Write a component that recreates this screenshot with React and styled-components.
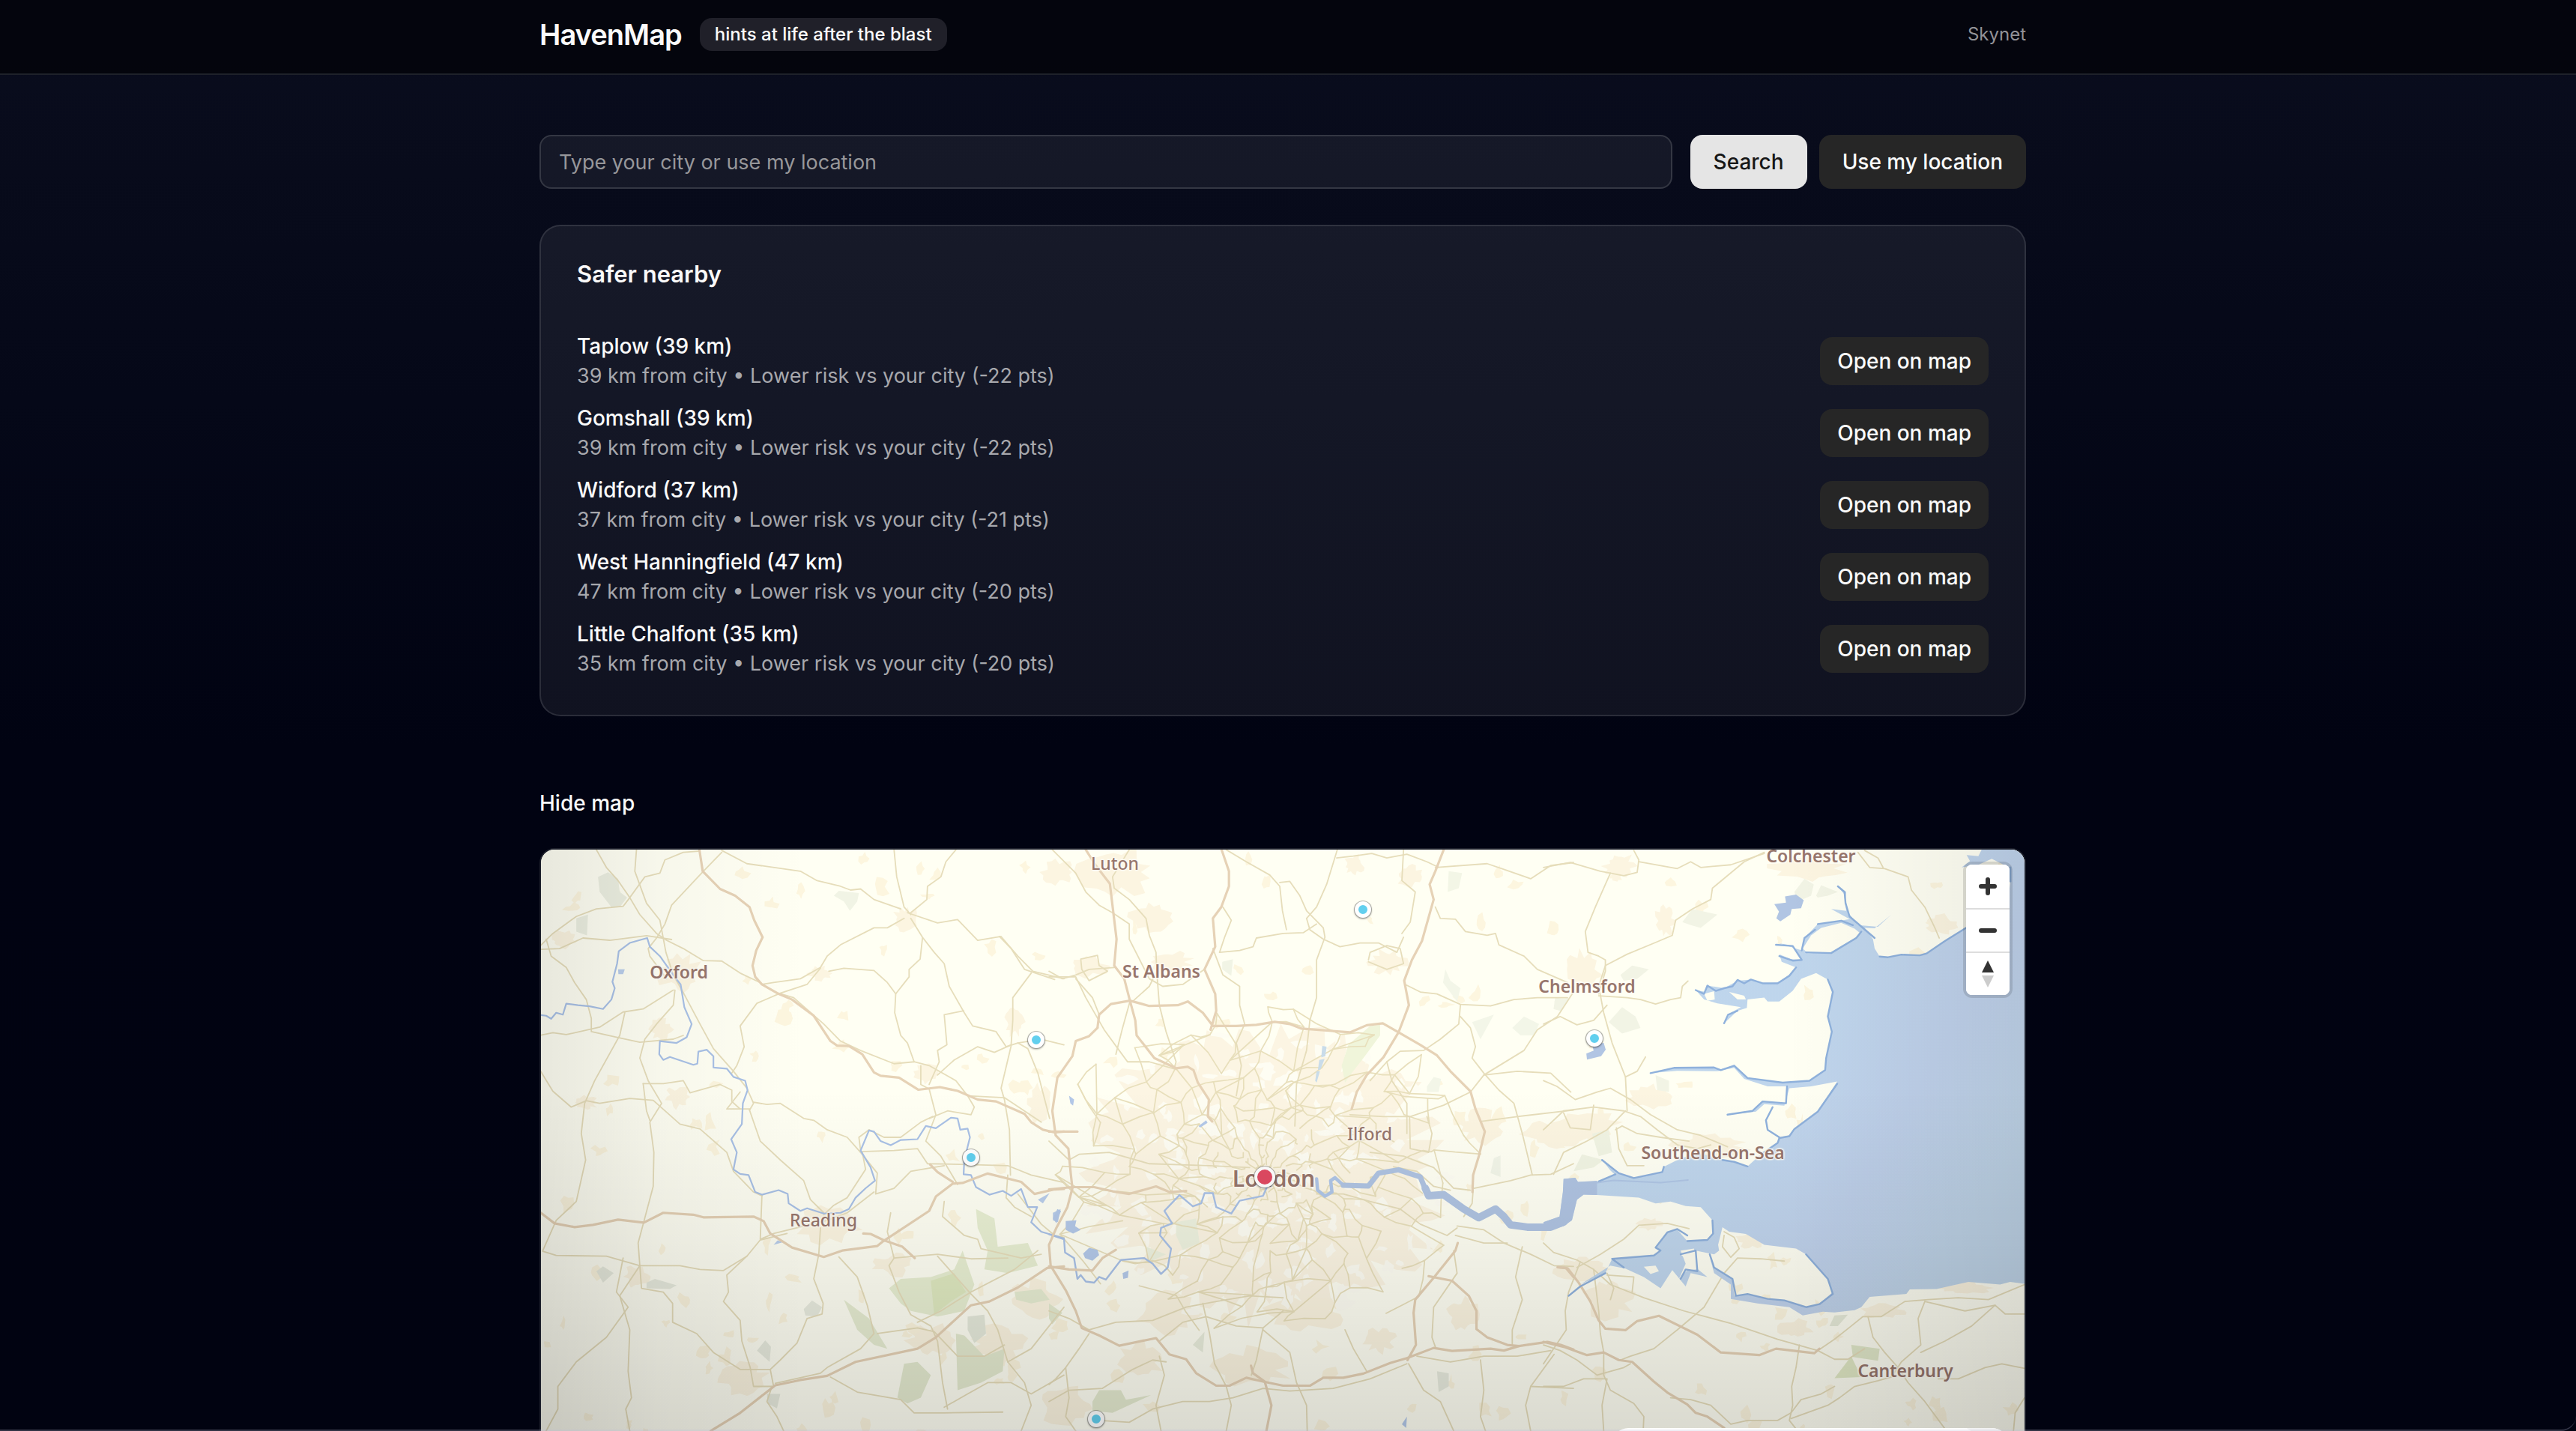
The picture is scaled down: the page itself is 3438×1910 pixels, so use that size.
import React from "react";
import styled, { createGlobalStyle } from "styled-components";

const GlobalStyle = createGlobalStyle`
  *, *::before, *::after { box-sizing: border-box; }
  html { background: #010312; }
  body {
    margin: 0;
    font-family: Inter, "Liberation Sans", sans-serif;
    color: #fafafa;
    -webkit-font-smoothing: antialiased;
  }
  button, input { font: inherit; color: inherit; }
`;

const Page = styled.div`
  height: 100vh;
  overflow: hidden;
  background: linear-gradient(180deg, #0a0d1e 0%, #080b1b 12%, #050818 28%, #010312 52%, #010311 100%);
`;

const WindowEdge = styled.div`
  position: fixed;
  inset: 0;
  pointer-events: none;
  border-bottom: 2px solid rgba(190, 190, 215, 0.26);
  border-bottom-right-radius: 20px;
`;

const Container = styled.div`
  max-width: 2048px;
  margin: 0 auto;
  padding: 0 32px;
`;

const Scroller = styled.div`
  padding-right: 14px;
`;

const Header = styled.header`
  background: rgba(0, 0, 0, 0.55);
  border-bottom: 2px solid #1e212a;
  padding-right: 14px;
`;

const HeaderRow = styled.div`
  display: flex;
  align-items: center;
  justify-content: space-between;
  height: 98px;
  padding-bottom: 6px;
`;

const Brand = styled.div`
  display: flex;
  align-items: center;
  gap: 24px;
`;

const Logo = styled.h1`
  margin: 0;
  font-size: 38px;
  line-height: 56px;
  font-weight: 600;
  letter-spacing: -0.025em;
`;

const Badge = styled.span`
  padding: 0 20px;
  font-size: 24px;
  line-height: 44px;
  font-weight: 500;
  border-radius: 16px;
  background: #202029;
`;

const Note = styled.span`
  font-size: 24px;
  line-height: 32px;
  color: #929297;
`;

const SearchForm = styled.form`
  display: flex;
  gap: 24px;
  padding-top: 80px;
`;

const CityInput = styled.input`
  flex: 1;
  min-width: 0;
  height: 72px;
  padding: 0 24px;
  font-size: 27px;
  border: 2px solid #343743;
  border-radius: 16px;
  background: rgba(255, 255, 255, 0.055);
  outline: none;
  &::placeholder { color: #97979a; opacity: 1; }
`;

const Actions = styled.div`
  display: flex;
  gap: 16px;
`;

const Button = styled.button`
  height: ${(p) => (p.$small ? 64 : 72)}px;
  padding: 0 ${(p) => (p.$small ? 23 : 31)}px;
  border: 0;
  border-radius: 16px;
  font-size: 28px;
  font-weight: 500;
  white-space: nowrap;
  background: ${(p) => (p.$light ? "#e5e5e5" : "#262626")};
  color: ${(p) => (p.$light ? "#171717" : "#fafafa")};
`;

const Card = styled.section`
  margin-top: 48px;
  padding: 48px;
  border: 2px solid rgba(255, 255, 255, 0.11);
  border-radius: 28px;
  background: rgba(255, 255, 255, 0.062);
`;

const CardTitle = styled.h2`
  margin: 0 0 60px;
  font-size: 31px;
  line-height: 32px;
  font-weight: 600;
`;

const PlaceList = styled.ul`
  list-style: none;
  margin: 0;
  padding: 0;
  display: grid;
  gap: 16px;
`;

const Place = styled.li`
  display: flex;
  align-items: center;
  justify-content: space-between;
`;

const PlaceName = styled.div`
  font-size: 28px;
  line-height: 40px;
  font-weight: 500;
`;

const PlaceMeta = styled.div`
  font-size: 27px;
  line-height: 40px;
  color: #a7a8ad;
`;

const Toggle = styled.button`
  display: block;
  margin: 80px 0 24px;
  padding: 0;
  border: 0;
  background: none;
  font-size: 28px;
  line-height: 72px;
  font-weight: 500;
`;

const MapFrame = styled.section`
  position: relative;
  height: 844px;
  overflow: hidden;
  border: 2px solid #1c1f2b;
  border-radius: 20px;
  background: #fffff3;
`;

const MapDrawing = styled.svg`
  display: block;
  width: 100%;
  height: 840px;
`;

const MapShade = styled.div`
  position: absolute;
  inset: 0;
  pointer-events: none;
  background:
    linear-gradient(90deg, rgba(0, 0, 0, 0.09), rgba(0, 0, 0, 0.03) 8%, transparent 18%, transparent 84%, rgba(0, 0, 0, 0.07)),
    linear-gradient(180deg, transparent 38%, rgba(0, 0, 0, 0.05) 62%, rgba(0, 0, 0, 0.17) 100%);
`;

const MapItem = styled.span`
  position: absolute;
  left: ${(p) => (p.$x / 1980) * 100}%;
  top: ${(p) => p.$y}px;
  transform: translate(-50%, -50%);
`;

const Town = styled(MapItem)`
  font-family: "Noto Sans", "Open Sans", sans-serif;
  font-size: ${(p) => (p.$city ? 30 : 23)}px;
  line-height: 36px;
  font-weight: ${(p) => p.$weight || 500};
  color: #97766c;
  white-space: nowrap;
  text-shadow: 0 0 2px #fffdf6, 1px 1px 2px #fffdf6, -1px -1px 2px #fffdf6, 1px -1px 2px #fffdf6, -1px 1px 2px #fffdf6;
`;

const Pin = styled(MapItem)`
  width: ${(p) => (p.$main ? 28 : 22)}px;
  height: ${(p) => (p.$main ? 28 : 22)}px;
  border: ${(p) => (p.$main ? 4 : 5)}px solid #fff;
  border-radius: 50%;
  background: ${(p) => p.$color};
  box-shadow: 0 0 0 1px rgba(80, 80, 80, 0.35), 0 1px 2px 1px rgba(0, 0, 0, 0.25);
`;

const Controls = styled.div`
  position: absolute;
  top: 20px;
  right: 20px;
  display: flex;
  flex-direction: column;
  width: 58px;
  overflow: hidden;
  border-radius: 8px;
  background: #fff;
`;

const ControlsHalo = styled.div`
  position: absolute;
  top: 20px;
  right: 20px;
  width: 58px;
  height: 174px;
  border-radius: 8px;
  box-shadow: 0 0 0 4px rgba(0, 0, 0, 0.12);
`;

const Control = styled.button`
  display: grid;
  place-items: center;
  height: 58px;
  padding: 0;
  border: 0;
  background: #fff;
  & + & { border-top: 2px solid #ddd; }
`;

const Attribution = styled.div`
  position: absolute;
  right: 20px;
  bottom: 20px;
  width: 532px;
  height: 48px;
  border-radius: 24px;
  background: #fff;
  box-shadow: inset -44px 0 0 -2px #f2f2f2;
`;

const places = [
  ["Taplow", 39, 22],
  ["Gomshall", 39, 22],
  ["Widford", 37, 21],
  ["West Hanningfield", 47, 20],
  ["Little Chalfont", 35, 20],
];

const towns = [
  { name: "Luton", x: 766, y: 18 },
  { name: "Oxford", x: 184, y: 163, w: 600 },
  { name: "St Albans", x: 828, y: 162, w: 600 },
  { name: "Chelmsford", x: 1396, y: 182, w: 600 },
  { name: "Colchester", x: 1695, y: 8, w: 600 },
  { name: "Ilford", x: 1106, y: 379 },
  { name: "Southend-on-Sea", x: 1564, y: 404, w: 600 },
  { name: "Reading", x: 377, y: 494 },
  { name: "Canterbury", x: 1821, y: 695, w: 600 },
  { name: "London", x: 978, y: 439, city: true, w: 600 },
];

const pins = [
  [1097, 80],
  [661, 254],
  [1406, 252],
  [574, 411],
  [741, 760],
];

/* The map is drawn as three tiles laid side by side, each with its own unit grid. */
const WEST = "translate(-2 -14) scale(0.44643 0.5038)";
const MID = "translate(678 -14) scale(0.44643 0.5038)";
const EAST = "translate(1338 -14) scale(0.44643 0.5038)";

const motorways = {
  west: [
    "478,28 488,85 540,132 585,150 628,180 642,215 667,260 648,295 637,335 645,365 665,385 715,410 755,425 820,468 870,535 890,547 925,548 965,570 1000,618 1020,627 1075,632 1133,664 1197,657 1250,667 1310,690 1365,695 1450,728 1470,750 1505,770 1540,777 1568,775",
    "4,990 45,1018 105,1028 160,1022 235,1008 312,1016 370,990 460,995 490,1002 640,1000 670,1012 690,1045 755,1082 850,1107 905,1090 1010,1078 1028,1065 1165,985 1185,947 1235,913 1265,911 1340,886 1440,908 1480,940 1540,928 1568,927",
    "968,1045 990,1046 1030,1063 1085,1080 1122,1110",
    "1168,862 1190,882 1235,908",
    "512,1568 600,1520 705,1447 780,1433 860,1422 945,1385 1130,1350 1185,1320 1290,1235 1345,1225 1430,1188 1518,1136 1568,1132",
  ],
  mid: [
    "110,28 140,70 182,118 202,265 195,335 225,370 242,428 258,480 262,520 315,580 380,607 415,603 432,612 445,645 478,690 475,735 488,748",
    "516,28 538,85 538,125 515,180 490,210 497,285 465,345 497,410 500,455 483,505",
    "1180,28 1155,85 1138,120 1150,160 1115,270 1085,320 1062,375 1076,440 1045,512 1000,578 950,625 920,670 905,715",
    "145,500 150,465 185,437 242,428 300,442 385,440 415,430 460,460 490,495 560,495 620,492 675,484 720,490 755,502 830,507 900,512 950,493 998,488 1045,512 1110,545 1160,573 1200,615 1260,668 1275,715 1303,775 1285,840 1268,890 1266,935",
    "145,500 120,522 80,535 70,575 25,632 10,720 20,785 58,820 65,885 70,925 55,975 22,1030 0,1075 5,1130 50,1195 80,1250 98,1295 150,1315 210,1342 320,1322 360,1365 410,1378 440,1415 500,1448 540,1448 590,1427 640,1437 700,1448 780,1448 820,1427 880,1427 940,1416 1020,1388 1070,1375 1150,1348 1205,1356 1320,1350 1360,1355 1405,1343 1490,1332 1530,1340 1568,1352",
    "1222,1070 1215,1090 1150,1162 1095,1220 1090,1255 1097,1340 1072,1380",
    "1135,1158 1205,1170 1255,1210 1278,1250 1278,1298 1310,1320 1370,1340 1405,1343",
    "0,928 70,922 135,922 190,933 240,940 320,920 360,935 410,932",
    "0,1132 60,1140 130,1143 160,1110 200,1088",
    "0,775 85,775",
    "604,1395 610,1415 645,1437 665,1500 650,1568",
    "1522,1134 1545,1136 1568,1160",
  ],
  east: [
    "42,1134 72,1137 105,1175 140,1225 165,1275 185,1297 245,1301 280,1277 345,1263 460,1313 530,1360 645,1367 695,1350 810,1362 825,1350",
    "0,1332 60,1345 130,1367 180,1360 225,1380 265,1385 330,1437 370,1466 430,1498 455,1520 490,1530 540,1560",
  ],
};

const roads = {
  west: [
    "170,28 200,75 235,110 270,155 300,200 350,250 380,268 430,290 490,322 545,323 600,355 660,380",
    "290,28 285,85 320,170 360,215 378,300 400,360 432,410 480,490 520,555 580,615 620,660 640,700 628,718",
    "628,715 560,715 600,670",
    "545,35 490,85 395,175 375,225 350,262 325,290 330,310 380,370",
    "0,285 40,250 110,205 170,185 250,178 270,155 315,100 360,90 375,55 430,35 475,32",
    "4,292 60,290 130,262 210,268 320,256 395,266",
    "20,265 35,310 80,340 105,380 140,425 155,475 155,510 230,525 300,538 400,530 430,520",
    "0,520 40,513 80,518 180,498 250,458 310,450 400,400",
    "255,460 240,520 165,640 135,700 125,780 138,850 110,960 50,1010 10,1090",
    "405,400 400,440 350,490 315,530 300,580 325,640 365,700 330,750 342,830 340,920 310,1020 295,1070 300,1130 240,1210 270,1300 265,1410 275,1480 258,1510 270,1568",
    "310,648 320,720 330,745",
    "310,648 370,648 430,640 450,672 540,650 575,665 575,695 600,715",
    "0,610 40,668 95,710 140,693 180,700 270,687 340,692 420,755 480,768 560,830 580,880 640,935 665,945",
    "628,718 660,800 720,850 790,905 810,955 850,990",
    "640,697 680,703 720,700 790,740 820,745 860,770 920,790 960,830",
    "545,30 620,65 780,85 830,110 900,125 930,135 960,132 1000,160 1080,185",
    "1060,28 1068,100 1090,180 1110,200",
    "1245,28 1215,60 1200,100 1160,125 1158,160 1110,195",
    "1100,195 1190,222 1250,213 1310,268 1380,258 1430,310 1475,350 1568,370",
    "1375,258 1410,290 1450,345 1540,372",
    "1090,210 1040,235 1000,235 900,280 860,310 840,340 780,370 700,380 665,385",
    "840,342 800,385 720,408 650,435 600,495 612,550 590,600 575,620",
    "865,350 910,342 1000,348 1040,380 1065,410 1062,460 1080,520 1100,540 1120,590",
    "1110,210 1145,260 1180,300 1210,330 1225,390 1270,460 1295,495 1365,510 1395,550 1430,540 1460,555 1490,620 1525,740",
    "1145,262 1138,318 1105,345 1105,365 1065,410",
    "1268,455 1210,465 1218,545 1190,560 1195,590 1165,650",
    "715,408 760,420 850,490 900,535 960,560 1060,595 1120,590 1165,600 1245,640 1280,680 1390,685 1500,750",
    "1190,625 1240,585 1310,550 1360,565 1410,545 1415,480 1415,420 1470,355",
    "1430,540 1500,530 1568,545",
    "1140,600 1140,650 1165,662 1185,730 1155,800 1200,840 1250,915",
    "1165,740 1220,720 1290,730 1300,710 1280,680",
    "1410,548 1380,660 1390,690 1405,770 1408,890",
    "960,825 955,790 985,770 1030,790 1080,790 1140,750 1175,735",
    "960,828 1060,825 1130,820 1160,860 1280,862 1400,865 1470,890 1568,910",
    "960,830 1010,885 1005,940 1060,925 1110,880 1175,870 1210,865",
    "850,995 880,970 920,950 975,875 965,830",
    "665,945 660,1060 700,1045 860,1010 920,990 1000,935",
    "10,1092 50,1103 200,1105 300,1130 420,1130 480,1140 550,1143 620,1105 660,1062 740,1045",
    "620,1105 560,1155 565,1200 550,1225 600,1275 605,1330 630,1400 640,1450 660,1450 695,1450",
    "250,1110 230,1200 265,1240 200,1320 110,1385 55,1450 55,1510 20,1568",
    "300,1130 305,1190 370,1200 398,1230 398,1280 470,1310 520,1360 600,1405 690,1405 700,1450",
    "840,1030 835,1100 820,1165 848,1230 845,1258 800,1270 770,1335 720,1380 690,1405",
    "895,1107 950,1160 980,1235 1000,1310 960,1350 860,1400 840,1415 705,1442",
    "1050,990 1040,1040 1060,1110 1045,1130 1075,1200 1110,1260 1170,1290 1190,1330 1205,1440 1220,1510",
    "870,1425 950,1465 1080,1485 1120,1520 1210,1520 1385,1518",
    "1430,940 1500,1020 1540,1050 1568,1055",
    "1210,960 1205,1000 1270,1050 1310,1060 1320,1085 1440,1110 1500,1100",
    "1060,1110 1190,1100 1290,1112 1400,1110",
    "1190,1105 1250,1165 1290,1205 1340,1250 1370,1300 1400,1385 1450,1440 1470,1500 1440,1568",
    "1130,1280 1200,1250 1290,1200 1420,1140 1490,1090",
    "1010,1310 1130,1295 1180,1305 1250,1370 1330,1370 1390,1340",
    "1400,1385 1470,1350 1568,1240",
    "1210,1505 1280,1470 1340,1440 1410,1440 1470,1470 1568,1420",
    "695,1450 680,1490 710,1530 730,1568",
    "1400,890 1395,950 1420,975 1470,1000",
  ],
  mid: [
    "10,28 80,90 110,140 150,175 190,195 240,225 240,265 300,370 340,390 400,385 465,345",
    "240,28 190,100 195,130 240,160 290,210 300,255 320,300 322,350 300,390 250,430",
    "0,350 40,370 80,360 120,345 195,340",
    "95,318 145,308 150,335 175,350 120,375 98,345 95,318",
    "80,370 130,420 150,465",
    "0,365 80,365 110,420 165,505 210,560 235,590 300,590 380,610",
    "242,430 220,500 200,570",
    "322,350 330,440 350,510 380,590 375,605",
    "530,28 590,60 660,95 690,125 698,190 710,240",
    "862,28 830,120 800,180 770,210 780,240 820,265 870,285 930,275 985,275 1040,300 1060,260",
    "860,50 910,45 965,38 1010,50 1070,40 1130,60 1165,75",
    "690,115 720,112 750,150 770,190 820,235 825,260 800,320 800,420 780,480 770,560 740,650 735,760",
    "510,300 570,295 610,285 620,262 700,250 760,248 800,225",
    "520,180 545,215 525,260 510,300",
    "490,290 520,360 570,390 570,440 585,490 560,540 575,600 560,680",
    "955,320 960,300 1010,282 1050,290 1060,330 1010,345 955,325",
    "1060,28 1055,110 1095,140 1080,220 1055,250",
    "1155,75 1310,65 1360,80 1440,105 1500,70 1568,62",
    "1155,180 1170,210 1215,212 1245,245 1310,255 1335,250 1345,280 1420,310 1460,345 1550,380",
    "1065,385 1110,405 1160,410 1230,438 1320,442 1390,425 1460,420 1550,420",
    "1230,440 1225,490 1170,530 1120,560 1050,562 1010,590 960,640",
    "1230,470 1260,500 1275,550 1265,580 1300,620 1345,665 1390,700 1415,780 1445,890",
    "1568,405 1520,470 1460,505 1420,560 1300,625 1260,670 1180,705 1130,720 1080,735 1000,735 900,730",
    "1300,625 1400,615 1500,620 1560,670",
    "1290,748 1400,735 1568,718",
    "1270,925 1380,905 1440,890 1500,888 1568,860",
    "1130,735 1145,780 1135,830 1080,820 1078,735",
    "1010,590 1025,640 1070,700 1070,780",
    "960,830 1060,840 1150,870 1210,925 1260,930",
    "1030,868 1100,880 1150,920 1200,930",
    "1240,1000 1265,965 1268,930",
    "1220,1025 1300,1035 1360,1070 1440,1100 1510,1130 1568,1132",
    "1220,1030 1190,1050 1110,1020 1050,980 960,960 880,940 800,940",
    "1215,1050 1300,1070 1370,1070",
    "1415,1080 1395,1160 1415,1220 1385,1300 1385,1340",
    "1210,1090 1220,1150 1150,1240 1145,1320 1155,1345",
    "0,800 60,850 90,835 180,830 300,860 480,865 600,870",
    "0,1250 60,1270 120,1300 200,1280 310,1275 410,1240 500,1225 600,1210 700,1215",
    "330,1330 400,1280 470,1265 560,1290 640,1295 700,1250",
    "120,1310 90,1350 50,1400 20,1430 0,1445",
    "50,1400 60,1480 50,1530 80,1568",
    "0,1490 60,1460 160,1455 250,1405 310,1380 350,1385",
    "330,1370 345,1420 320,1500 335,1568",
    "150,1540 240,1545 310,1510 400,1490 480,1490 550,1480 640,1455 720,1462 850,1455 960,1430 1070,1390",
    "460,1230 480,1310 495,1390 530,1450 545,1500 530,1568",
    "640,1300 720,1360 740,1440 770,1500 772,1568",
    "640,1295 620,1380 605,1420",
    "885,1300 910,1350 950,1410",
    "1075,1390 1120,1460 1170,1490 1210,1568",
    "1100,1370 1200,1385 1300,1370 1400,1370 1500,1355",
    "1290,1380 1300,1460 1290,1530 1305,1568",
    "1510,1365 1440,1450 1425,1500 1440,1568",
    "1440,1450 1568,1455",
  ],
  east: [
    "0,75 80,62 170,85 200,90 240,97 280,88 285,55 270,30",
    "200,90 185,120 155,180 125,245 133,300 165,310 185,320 185,350 165,410",
    "660,35 600,60 505,130 500,160 445,185 395,215 385,255 340,272 250,305 185,335 165,390 180,460 205,540 245,630 250,720",
    "285,60 400,78 440,60 470,75 560,68 660,38",
    "165,415 250,420 290,425 335,437 380,425 410,420 415,390 432,376",
    "940,35 975,75 1020,78 1090,100 1100,135 1140,180 1170,235 1183,262",
    "960,30 1000,50 1015,75",
    "0,490 50,470 100,492 150,480 190,440",
    "0,640 40,655 95,690 160,670 200,660 260,690 320,730 400,770 470,785 550,815",
    "0,770 60,720 150,710 240,720 290,735 340,770 400,810 460,820 500,810",
    "60,725 80,765 140,770 150,705",
    "245,630 280,615 305,577",
    "215,770 235,760 280,780 350,790 435,800",
    "30,888 60,830 130,800 190,770 245,720",
    "218,765 225,820 250,865 300,865",
    "0,1070 30,1095 100,1115 150,1140 200,1180 300,1215 420,1250 560,1283 700,1325 820,1355",
    "100,1135 170,1100 240,1060 285,1023 370,1018 435,1032",
    "110,1120 75,1200 65,1250 68,1300 0,1390",
    "150,1140 165,1250 170,1310 180,1360 180,1420 200,1460 270,1495 300,1530 298,1568",
    "230,1380 260,1370 330,1350 400,1300 480,1240 540,1150 580,1110 650,1112 720,1118",
    "540,1050 535,1080 560,1108 585,1085 570,1055 540,1040",
    "0,1340 50,1355 100,1380 160,1420 240,1400 260,1390",
    "0,1450 60,1450 120,1430 190,1430 175,1500 180,1568",
    "820,1355 870,1378 910,1378 960,1350",
    "820,1355 870,1325 920,1290 955,1265 1010,1265 1080,1225 1150,1220 1240,1215 1330,1220 1438,1180",
    "1140,1225 1120,1270 1128,1340 1070,1385 1040,1425 1000,1435 930,1450 885,1480 850,1500 740,1535",
    "970,1265 985,1320 1020,1360 1060,1400 1090,1440 1140,1490 1205,1568",
    "1438,1258 1380,1258 1350,1235 1260,1250 1140,1225",
    "1350,1235 1280,1290 1200,1330 1128,1360",
    "765,1340 755,1400 742,1450 745,1500 735,1540 760,1568",
    "380,1480 440,1485 500,1500 560,1550 610,1540 700,1540 740,1520 770,1485 830,1470 870,1450",
    "1180,1430 1240,1430 1320,1400 1370,1390 1438,1402",
    "1438,1480 1410,1520 1405,1568",
    "190,1150 210,1190 200,1220",
    "190,1155 270,1160 265,1200",
  ],
};

const rivers = {
  west: ["4,466 20,468 35,476 50,460 70,465 80,436 115,440 150,443 190,450 215,425 225,395 218,378 232,330 237,297 270,275 322,262 330,285 360,310 400,360 422,385 433,445 455,490 440,525 410,540 360,535 358,570 370,585 390,577 460,598 472,595 475,563 500,558 520,575 520,605 560,608 580,630 615,640 622,665 608,700 605,755 573,795 590,830 580,875 600,887 625,890 645,935 665,942 715,930 742,940 745,965 780,985 800,978 850,992 900,990 925,980 945,950 975,925 1003,905 990,870 960,825 985,772 1000,775 1020,800 1050,811 1080,797 1130,795 1155,760 1185,766 1230,738 1250,740 1258,770 1280,767 1287,790 1270,850 1268,888 1290,890 1305,922 1345,942 1385,932 1410,945 1440,927 1460,975 1488,975 1470,1015 1500,1040 1568,1058"],
  mid: ["0,1047 45,1060 48,1095 75,1110 85,1165 95,1155 110,1172 135,1175 150,1160 170,1167 215,1115 285,1110 310,1125 335,1152 355,1135 365,1085 332,1050 335,1030 368,1018 345,985 390,943 430,973 455,965 465,938 490,938 500,975 545,992 570,958 640,945 655,915"],
};

const SEA =
  "M1438,28 L1310,28 1300,45 1265,42 1275,58 1250,75 1300,68 1340,52 1385,72 1396,112 1388,165 1263,235 1200,270 1145,303 1125,308 1070,306 1030,313 1005,311 990,290 985,265 960,235 990,236 1040,200 1000,232 940,228 912,196 903,160 905,140 880,125 898,145 905,190 860,185 915,212 890,216 820,225 780,262 772,295 700,275 745,283 772,320 740,318 705,305 712,325 755,340 735,360 700,380 655,382 620,372 580,375 540,395 490,388 485,405 455,400 480,425 520,435 590,445 560,460 540,488 580,455 608,447 610,425 660,420 670,430 705,430 745,402 770,370 815,355 850,372 865,405 850,470 862,510 845,580 842,612 795,640 715,645 610,633 570,600 530,610 510,605 390,606 320,620 400,614 520,615 570,606 600,635 670,655 728,655 725,702 655,695 625,720 550,730 635,722 660,702 720,706 735,660 800,655 878,642 820,722 750,768 735,785 705,790 700,805 650,835 610,867 540,850 460,830 400,850 360,868 355,882 270,898 225,885 175,850 200,878 215,890 165,907 103,908 95,897 60,900 58,935 48,1000 0,1015 0,1038 60,1025 85,1010 100,955 120,942 160,943 285,950 335,965 380,960 425,972 470,975 505,1010 507,1045 490,1062 430,1065 400,1035 370,1040 335,1080 348,1092 330,1103 205,1112 185,1150 110,1180 200,1130 245,1138 300,1160 350,1190 385,1142 425,1185 440,1150 490,1160 455,1135 410,1100 455,1090 510,1100 525,1090 522,1075 535,1028 555,1040 605,1046 660,1075 755,1085 785,1100 850,1165 865,1200 825,1232 785,1240 720,1222 670,1218 610,1205 570,1210 565,1165 505,1130 495,1100 510,1150 560,1180 560,1218 640,1230 735,1240 775,1262 835,1252 870,1254 930,1248 950,1240 975,1213 1085,1205 1095,1193 1175,1192 1270,1173 1365,1180 1395,1173 1438,1178 Z";

const SHORES = [
  "1396,75 1396,112",
  "1263,235 1200,270 1145,303 1125,308 1070,306 1030,313 1005,311",
  "880,125 900,140 903,170 915,205 990,262",
  "785,300 860,302 935,262 950,245",
  "820,225 890,216 925,228",
  "772,295 780,262 812,240",
  "695,280 745,283 772,320 745,322 705,310",
  "755,340 735,362 700,382 655,382 620,372 600,382 580,373 565,390 540,395 515,402 490,388 480,410 455,400",
  "540,488 552,465 580,455",
  "850,372 865,405 850,470 862,510 845,580 842,612 795,640 715,645 610,633 570,600 530,612 510,605 390,606 320,620",
  "878,648 820,722 750,768 735,787 705,792 700,805 650,835",
  "728,655 725,700 655,695 625,720 550,730",
  "685,710 665,745 670,770 705,790",
  "610,867 570,855 535,850",
  "360,868 355,882 270,898 225,885 175,850",
  "215,888 165,907",
  "505,1010 507,1045 490,1062 430,1065",
  "430,1050 400,1033 370,1042 335,1082 350,1090 330,1103 205,1112 240,1135",
  "185,1150 110,1185 75,1210",
  "785,1100 850,1165 865,1205 825,1232 785,1240 720,1222 670,1218 610,1205 575,1210 565,1165 510,1135 497,1100",
  "410,1165 425,1140 460,1145 455,1090 410,1100",
];

const greens = {
  west: [
    ["175,100 205,88 235,105 240,140 262,155 240,180 215,180 180,140", "#ecefe1"],
    ["110,210 145,200 142,255 110,245", "#ecefe1"],
    ["880,150 895,137 955,143 950,165 928,190 910,165", "#f1f4e5"],
    ["1305,980 1360,1005 1370,1080 1460,1070 1490,1130 1400,1150 1330,1140 1340,1090 1310,1030", "#e8efd2"],
    ["1045,1190 1080,1165 1170,1160 1240,1140 1265,1090 1300,1180 1270,1250 1190,1265 1110,1250 1080,1230", "#e8efd2"],
    ["1170,1170 1240,1150 1275,1200 1230,1225 1180,1260", "#dfe9c0"],
    ["910,1220 985,1270 1040,1350 1000,1340 950,1300", "#e7edd2"],
    ["1245,1310 1270,1315 1330,1370 1390,1350 1385,1410 1320,1440 1250,1460", "#e5ebd0"],
    ["1090,1390 1130,1385 1170,1420 1140,1480 1100,1495 1070,1480", "#e5ebd0"],
    ["1280,1265 1330,1260 1335,1310 1300,1335 1280,1300", "#e6eadb"],
    ["1420,1200 1500,1192 1525,1220 1470,1230 1425,1220", "#e7edd2"],
    ["170,1145 190,1132 222,1150 190,1175", "#e9ecdf"],
    ["320,1175 345,1165 410,1182 390,1192 320,1190", "#e9ecdf"],
    ["790,1245 815,1222 845,1240 830,1265 795,1262", "#e9ecdf"],
    ["650,1355 675,1328 692,1345 688,1385", "#e9ecdf"],
    ["680,1470 720,1470 710,1508 682,1495", "#e9ecdf"],
  ],
  mid: [
    ["1195,85 1235,90 1225,130 1192,140", "#f3f6e6"],
    ["518,325 550,318 545,362 518,345", "#f1f4e5"],
    ["875,600 895,545 960,495 990,492 990,520 940,580 905,620 885,645", "#f0f5da"],
    ["1185,345 1200,375 1230,395 1220,430 1178,380", "#f3f6e8"],
    ["1265,485 1330,465 1290,530", "#f3f6e8"],
    ["1385,500 1420,470 1465,490 1450,520 1410,520", "#f3f6e8"],
    ["1130,655 1150,630 1172,635 1165,670 1130,670", "#f3f6e8"],
    ["1510,430 1555,420 1530,458", "#f3f6e8"],
    ["1330,845 1350,838 1350,895 1320,885", "#f2f5e8"],
    ["380,1015 440,1005 450,1070 400,1088 380,1050", "#eef2df"],
    ["290,1080 350,1100 300,1120", "#eef2df"],
    ["430,1340 465,1305 460,1360", "#eaeedd"],
    ["130,1490 150,1460 215,1460 230,1485 305,1473 190,1520 130,1515", "#e5ebd0"],
    ["1160,1410 1195,1415 1195,1450 1165,1465", "#e9ecdf"],
    ["0,1230 40,1255 10,1285 0,1270", "#e5ebd0"],
  ],
  east: [
    ["780,105 808,120 800,150 760,165 750,140", "#f2f4e5"],
    ["815,150 830,122 880,140 850,150 820,155", "#f2f4e5"],
    ["415,220 445,185 520,200 470,235 440,228", "#f2f4e5"],
    ["230,360 265,335 315,345 280,370 240,375", "#f2f4e5"],
    ["195,485 235,445 275,470 290,500 235,515", "#f2f4e5"],
    ["335,625 375,640 375,670 340,665", "#f2f4e5"],
    ["145,780 195,770 205,830 165,840", "#f1f4e3"],
    ["90,880 115,835 180,850 150,870", "#f1f4e3"],
    ["35,420 70,425 50,455 30,450", "#f2f4e5"],
    ["870,1428 920,1370 950,1425", "#e2eac6"],
    ["920,1340 1005,1350 1000,1382 925,1372", "#e3eacb"],
    ["855,1290 870,1262 910,1260 880,1290", "#e8ecda"],
  ],
};

const ponds = {
  west: [
    "235,345 255,345 250,358 236,358",
    "1490,955 1525,938 1505,965",
    "1535,990 1558,980 1550,1015 1535,1010",
    "700,1075 712,1063 728,1068",
  ],
  mid: [
    "102,1098 120,1083 145,1088 150,1102 130,1117 108,1110",
    "12,1005 25,980 36,985 22,1018",
    "50,1012 82,1010 78,1025 95,1035 72,1045 50,1035",
    "220,1150 238,1143 236,1162 222,1165",
    "447,760 470,745 474,752 452,764",
    "60,680 75,690 72,706 64,700",
    "1055,1550 1070,1530 1068,1560",
  ],
  east: [
    "690,172 725,168 722,152 755,147 778,162 770,183 742,185 738,200 708,218 696,210 704,192",
    "128,568 150,560 145,545 180,540 186,558 172,575 130,584",
  ],
};

const reservoirs = ["817,548 830,550 826,575 814,578", "808,585 824,582 812,610 804,612", "800,615 810,615 800,645 796,640"];

const islands = [
  "775,290 800,255 830,235 890,222 930,237 948,250 930,262 858,300 790,302",
  "555,405 600,415 605,425 580,425",
  "480,410 510,403 512,425 490,428",
  "300,1133 335,1130 345,1145 320,1152",
  "410,1090 450,1085 460,1140 430,1142 405,1165 425,1125",
];

const seeded = (seed) => () => {
  seed = (seed * 16807) % 2147483647;
  return seed / 2147483647;
};

const jagged = (rnd, cx, cy, rx, ry, n, low = 0.5, span = 0.6) => {
  const pts = [];
  for (let i = 0; i < n; i++) {
    const a = (i / n) * Math.PI * 2;
    const k = low + rnd() * span;
    pts.push(`${(cx + Math.cos(a) * rx * k).toFixed(1)},${(cy + Math.sin(a) * ry * k).toFixed(1)}`);
  }
  return pts.join(" ");
};

/* Villages scattered over the countryside, in map units. */
const villages = (() => {
  const rnd = seeded(4711);
  return Array.from({ length: 210 }, () =>
    jagged(rnd, rnd() * 1980, rnd() * 840, 5 + rnd() * 8, 5 + rnd() * 8, 9, 0.35, 0.9)
  );
})();

const market = [
  [186, 165, 34, 30], [380, 500, 56, 30], [487, 93, 22, 20], [30, 120, 20, 14], [160, 240, 18, 18],
  [183, 330, 20, 18], [60, 338, 18, 12], [372, 165, 18, 12], [632, 230, 16, 24], [665, 340, 18, 30],
  [515, 300, 20, 16], [470, 555, 30, 18], [520, 655, 40, 26], [270, 705, 40, 26], [128, 570, 22, 18],
  [770, 30, 60, 40], [815, 90, 34, 24], [730, 155, 30, 20], [840, 150, 34, 18], [690, 30, 26, 20],
  [1130, 150, 30, 20], [1160, 36, 20, 18], [1085, 20, 16, 16], [1390, 160, 30, 30], [1440, 22, 26, 22],
  [1500, 95, 16, 24], [1690, 25, 60, 22], [1870, 100, 24, 16], [1390, 370, 60, 24], [1480, 330, 36, 18],
  [1560, 395, 60, 20], [1350, 380, 50, 24], [1255, 370, 36, 26], [1425, 600, 40, 34], [1390, 560, 44, 20],
  [1480, 500, 20, 10], [1615, 520, 22, 14], [1675, 640, 26, 16], [1790, 615, 40, 12], [1900, 585, 40, 10],
  [660, 600, 40, 30], [610, 660, 46, 30], [700, 740, 46, 30], [800, 680, 36, 30], [950, 690, 60, 30],
  [1230, 620, 24, 26], [1120, 655, 26, 20], [840, 620, 50, 34], [1020, 620, 60, 30],
];

/* Greater London: built-up area, open gaps and the street web around the centre. */
const city = (() => {
  const rnd = seeded(90210);
  const cx = 966;
  const cy = 432;
  const built = jagged(seeded(77), cx, cy, 250, 200, 110, 0.78, 0.26);
  const gaps = Array.from({ length: 170 }, () => {
    const a = rnd() * Math.PI * 2;
    const r = 0.22 + rnd() * 0.85;
    return jagged(rnd, cx + Math.cos(a) * 235 * r, cy + Math.sin(a) * 190 * r, 4 + rnd() * 13, 4 + rnd() * 11, 9, 0.35, 0.8);
  });
  const streets = [];
  const spokes = 34;
  const rings = [14, 28, 44, 62, 82, 104, 128, 154, 182, 212, 244];
  const grid = rings.map((r, j) =>
    Array.from({ length: spokes }, (_, i) => {
      const a = ((i + (rnd() - 0.5) * 0.9) / spokes) * Math.PI * 2;
      const k = r * (1 + (rnd() - 0.5) * 0.22);
      return [cx + Math.cos(a + j * 0.03) * k * 1.08, cy + Math.sin(a + j * 0.03) * k * 0.86];
    })
  );
  const f = (p) => `${p[0].toFixed(1)},${p[1].toFixed(1)}`;
  for (let j = 0; j < rings.length; j++) {
    for (let i = 0; i < spokes; i++) {
      const here = grid[j][i];
      const side = grid[j][(i + 1) % spokes];
      if (rnd() < 0.62 && (j > 2 || i % 2 === 0)) {
        const mid = [(here[0] + side[0]) / 2 + (rnd() - 0.5) * 8, (here[1] + side[1]) / 2 + (rnd() - 0.5) * 8];
        streets.push(`${f(here)} ${f(mid)} ${f(side)}`);
      }
      if (j < rings.length - 1 && (j > 3 || i % 2 === 0) && rnd() < 0.88) {
        const out = grid[j + 1][i];
        const mid = [(here[0] + out[0]) / 2 + (rnd() - 0.5) * 7, (here[1] + out[1]) / 2 + (rnd() - 0.5) * 7];
        streets.push(`${f(here)} ${f(mid)} ${f(out)}`);
      }
      if (j > 2 && j < rings.length - 1 && rnd() < 0.25) {
        streets.push(`${f(here)} ${f(grid[j + 1][(i + 1) % spokes])}`);
      }
    }
  }
  return { built, gaps, streets };
})();

const Lines = ({ items, ...rest }) => (
  <g fill="none" strokeLinejoin="round" strokeLinecap="round" {...rest}>
    {items.map((pts) => (
      <polyline key={pts} points={pts} vectorEffect="non-scaling-stroke" />
    ))}
  </g>
);

const Shapes = ({ items, ...rest }) => (
  <g {...rest}>
    {items.map((pts) => (
      <polygon key={pts} points={pts} />
    ))}
  </g>
);

const Tinted = ({ items, transform }) => (
  <g transform={transform}>
    {items.map(([pts, fill]) => (
      <polygon key={pts} points={pts} fill={fill} />
    ))}
  </g>
);

function MapArt() {
  const rnd = seeded(31);
  return (
    <MapDrawing viewBox="0 0 1980 840" preserveAspectRatio="xMidYMid slice" aria-hidden="true">
      <defs>
        <linearGradient id="sea" x1="0" x2="1" y1="0" y2="0.6">
          <stop offset="0" stopColor="#bdd6ec" />
          <stop offset="0.6" stopColor="#bfd5ec" />
          <stop offset="0.8" stopColor="#bfd1eb" />
          <stop offset="1" stopColor="#c0d5e9" />
        </linearGradient>
      </defs>
      <rect width="1980" height="840" fill="#fffff3" />
      <Shapes items={villages} fill="#fdf6df" />
      <polygon points={city.built} fill="#fcf5e3" />
      <Shapes items={market.map(([x, y, rx, ry]) => jagged(rnd, x, y, rx, ry, 22, 0.5, 0.5))} fill="#fcf5e1" />
      <Shapes items={city.gaps} fill="#fefdf3" />
      <Tinted items={greens.west} transform={WEST} />
      <Tinted items={greens.mid} transform={MID} />
      <Tinted items={greens.east} transform={EAST} />
      <Lines items={city.streets} stroke="#e8dfbb" strokeWidth="1.7" />
      <Lines items={roads.west} transform={WEST} stroke="#e6ddba" strokeWidth="1.8" />
      <Lines items={roads.mid} transform={MID} stroke="#e6ddba" strokeWidth="1.8" />
      <Lines items={roads.east} transform={EAST} stroke="#e6ddba" strokeWidth="1.8" />
      <Lines items={rivers.west} transform={WEST} stroke="#a9c1e6" strokeWidth="2.2" />
      <Lines items={rivers.mid} transform={MID} stroke="#a9c1e6" strokeWidth="2.4" />
      <Shapes items={ponds.west} transform={WEST} fill="#b9cdea" />
      <Shapes items={ponds.mid} transform={MID} fill="#b3c8e8" />
      <Shapes items={reservoirs} transform={MID} fill="#c9dcea" />
      <Lines items={motorways.west} transform={WEST} stroke="#e6d2b6" strokeWidth="3.2" />
      <Lines items={motorways.mid} transform={MID} stroke="#e6d2b6" strokeWidth="3.2" />
      <Lines items={motorways.east} transform={EAST} stroke="#e6d2b6" strokeWidth="3.2" />
      <g transform={EAST}>
        <path d={SEA} fill="url(#sea)" />
      </g>
      <Shapes items={ponds.east} transform={EAST} fill="#b1c5e3" />
      <Shapes items={islands} transform={EAST} fill="#fffef1" />
      <Lines items={SHORES} transform={EAST} stroke="#8fb1dc" strokeWidth="2.4" />
      <g transform={EAST}>
        <polygon
          points="160,905 103,908 95,897 60,900 58,935 48,1000 0,1015 0,1038 60,1025 85,1010 100,955 120,942 160,943"
          fill="#afc3e1"
        />
      </g>
      <Lines items={["160,910 210,904 350,910 432,903"]} transform={EAST} stroke="#afc5e4" strokeWidth="2" />
      <Lines items={["800,900 803,930 825,946 846,935 842,905 855,897 880,917"]} transform={MID} stroke="#afc5e6" strokeWidth="4.5" />
      <Lines items={["880,917 955,919 985,885 1045,876 1110,895 1130,938"]} transform={MID} stroke="#afc3e1" strokeWidth="7" />
      <Lines items={["1125,925 1135,945 1180,942 1240,980 1285,1003 1335,980 1360,1000 1380,1022 1430,1028 1500,1028 1540,1014"]} transform={MID} stroke="#afc3e1" strokeWidth="10" />
    </MapDrawing>
  );
}

export default function App() {
  return (
    <Page>
      <GlobalStyle />
      <Header>
        <Container>
          <HeaderRow>
            <Brand>
              <Logo>HavenMap</Logo>
              <Badge>hints at life after the blast</Badge>
            </Brand>
            <Note>Skynet</Note>
          </HeaderRow>
        </Container>
      </Header>
      <Scroller>
        <Container as="main">
          <SearchForm onSubmit={(e) => e.preventDefault()}>
            <CityInput type="text" aria-label="City" placeholder="Type your city or use my location" />
            <Actions>
              <Button $light type="submit">Search</Button>
              <Button type="button">Use my location</Button>
            </Actions>
          </SearchForm>
          <Card>
            <CardTitle>Safer nearby</CardTitle>
            <PlaceList>
              {places.map(([name, km, pts]) => (
                <Place key={name}>
                  <div>
                    <PlaceName>{`${name} (${km} km)`}</PlaceName>
                    <PlaceMeta>{`${km} km from city • Lower risk vs your city (-${pts} pts)`}</PlaceMeta>
                  </div>
                  <Button $small type="button">Open on map</Button>
                </Place>
              ))}
            </PlaceList>
          </Card>
          <Toggle type="button">Hide map</Toggle>
          <MapFrame aria-label="Map">
            <MapArt />
            {towns.map((t) => (
              <Town key={t.name} $x={t.x} $y={t.y} $city={t.city} $weight={t.w}>{t.name}</Town>
            ))}
            {pins.map(([x, y]) => (
              <Pin key={x} $x={x} $y={y} $color="#62cfee" />
            ))}
            <Pin $main $x={966} $y={437} $color="#e04a62" />
            <MapShade />
            <ControlsHalo />
            <Controls>
              <Control type="button" aria-label="Zoom in">
                <svg width="58" height="56" viewBox="0 0 58 56" stroke="#333" strokeWidth="6" strokeLinecap="round">
                  <path d="M20 28h18M29 19v18" />
                </svg>
              </Control>
              <Control type="button" aria-label="Zoom out">
                <svg width="58" height="56" viewBox="0 0 58 56" stroke="#333" strokeWidth="6" strokeLinecap="round">
                  <path d="M20 28h18" />
                </svg>
              </Control>
              <Control type="button" aria-label="Reset north">
                <svg width="58" height="56" viewBox="0 0 58 56">
                  <path d="M21 26l8-16 8 16z" fill="#333" />
                  <path d="M21 30l8 16 8-16z" fill="#ccc" />
                </svg>
              </Control>
            </Controls>
            <Attribution />
          </MapFrame>
        </Container>
      </Scroller>
      <WindowEdge />
    </Page>
  );
}
